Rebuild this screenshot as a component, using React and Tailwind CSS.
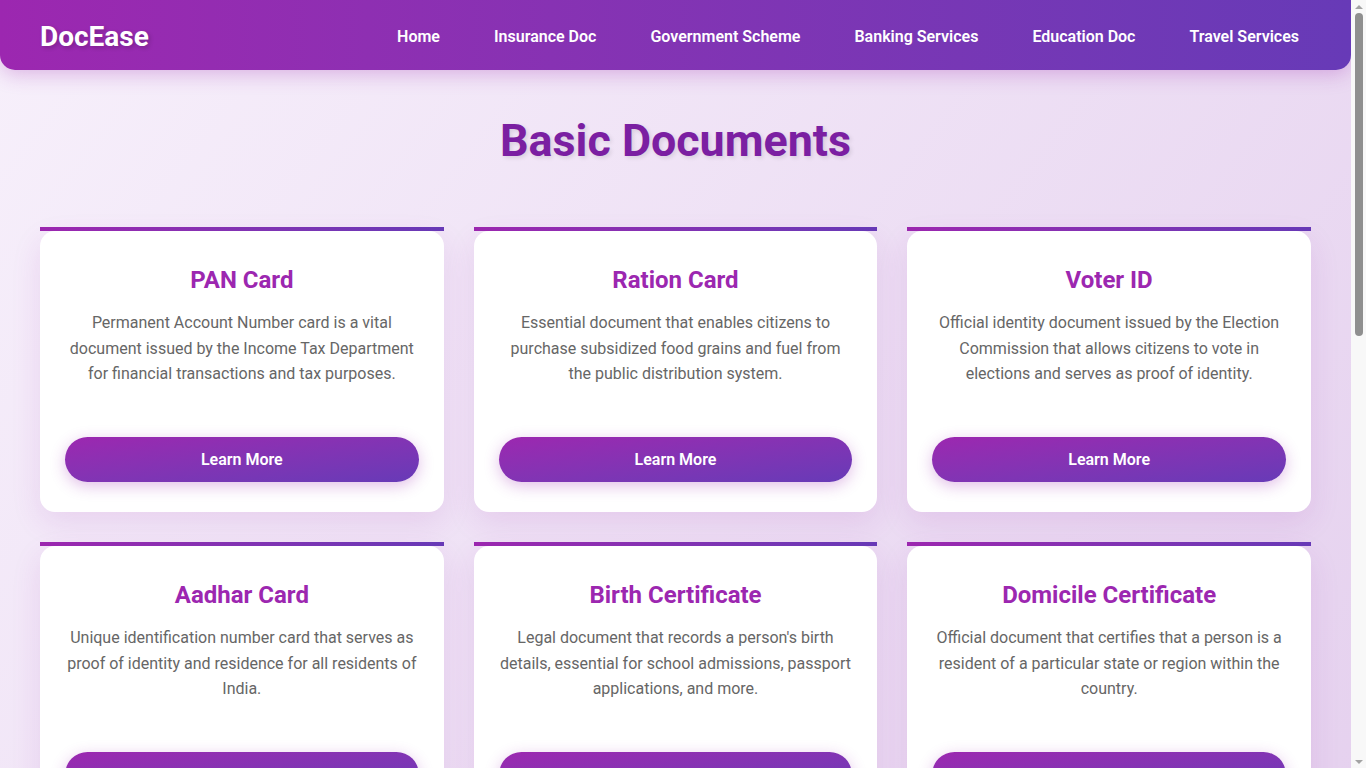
import React from 'react';

const links = ['Home', 'Insurance Doc', 'Government Scheme', 'Banking Services', 'Education Doc', 'Travel Services'];

const docs = [
  {
    title: 'PAN Card',
    text: 'Permanent Account Number card is a vital document issued by the Income Tax Department for financial transactions and tax purposes.',
  },
  {
    title: 'Ration Card',
    text: 'Essential document that enables citizens to purchase subsidized food grains and fuel from the public distribution system.',
  },
  {
    title: 'Voter ID',
    text: 'Official identity document issued by the Election Commission that allows citizens to vote in elections and serves as proof of identity.',
  },
  {
    title: 'Aadhar Card',
    text: 'Unique identification number card that serves as proof of identity and residence for all residents of India.',
  },
  {
    title: 'Birth Certificate',
    text: "Legal document that records a person's birth details, essential for school admissions, passport applications, and more.",
  },
  {
    title: 'Domicile Certificate',
    text: 'Official document that certifies that a person is a resident of a particular state or region within the country.',
  },
];

const DocCard = ({ title, text }) => (
  <div className="flex flex-col">
    {/* barra de cima */}
    <div className="h-[4px] bg-gradient-to-r from-[#9c27b0] to-[#673ab7]" />
    <div className="flex flex-col bg-white rounded-[15px] px-[25px] pt-[35px] pb-[30px] shadow-[0_10px_30px_rgba(156,39,176,0.12)] text-center">
      <h2 className="text-[24px] leading-[29px] font-bold text-[#9c27b0] mb-[15px]">{title}</h2>
      <p className="text-[16px] leading-[25.6px] text-[#666] h-[77px]">{text}</p>
      <button className="mt-[50px] h-[45px] w-full rounded-full bg-gradient-to-br from-[#9c27b0] to-[#673ab7] text-white text-[16px] font-semibold shadow-[0_4px_15px_rgba(156,39,176,0.3)]">
        Learn More
      </button>
    </div>
  </div>
);

// barra de rolagem desenhada (o navegador headless esconde a real)
const FakeScrollbar = () => (
  <div className="fixed top-0 right-0 w-[15px] h-screen bg-[#f8f8f8] flex flex-col items-center">
    <div className="h-[13px] flex items-center justify-center">
      <div className="w-0 h-0 border-l-[4px] border-r-[4px] border-b-[4px] border-l-transparent border-r-transparent border-b-[#a3a3a3]" />
    </div>
    <div className="w-[8px] h-[323px] rounded-full bg-[#8f8f8f]" />
    <div className="flex-1" />
    <div className="h-[13px] flex items-center justify-center">
      <div className="w-0 h-0 border-l-[4px] border-r-[4px] border-t-[4px] border-l-transparent border-r-transparent border-t-[#a3a3a3]" />
    </div>
  </div>
);

export default function App() {
  return (
    <div
      className="w-[1351px] min-h-[1750px] bg-gradient-to-br from-[#f7f0fb] to-[#dfc6ea]"
      style={{ fontFamily: 'Roboto, "Noto Sans", sans-serif' }}
    >
      <nav className="flex items-center justify-between h-[70px] pt-[3px] pl-[40px] pr-[52px] rounded-b-[15px] bg-gradient-to-r from-[#9c27b0] to-[#673ab7] shadow-[0_4px_20px_rgba(156,39,176,0.3)]">
        <div className="text-[28px] font-bold text-white [text-shadow:2px_2px_4px_rgba(0,0,0,0.2)]">DocEase</div>
        <ul className="flex gap-[54px]">
          {links.map((l) => (
            <li key={l} className="text-white text-[16px] font-semibold">
              {l}
            </li>
          ))}
        </ul>
      </nav>

      <main className="px-[40px]">
        <h1 className="text-center text-[44.8px] leading-[54px] font-bold text-[#7b1fa2] mt-[44px] mb-[59px] [text-shadow:2px_2px_4px_rgba(0,0,0,0.1)]">
          Basic Documents
        </h1>
        <div className="grid grid-cols-3 gap-[30px]">
          {docs.map((d) => (
            <DocCard key={d.title} {...d} />
          ))}
        </div>
      </main>
      <FakeScrollbar />
    </div>
  );
}
